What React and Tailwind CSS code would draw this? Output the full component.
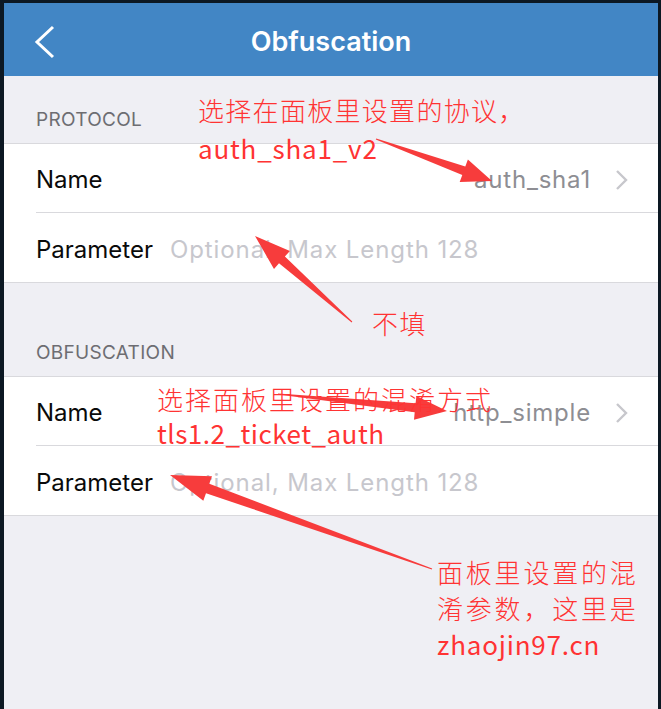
const ui = { fontFamily: 'Inter, "Noto Sans", sans-serif' };
const cjk = { fontFamily: '"Noto Sans CJK SC", "Noto Sans", sans-serif' };

// tapered arrow polygon from tail (x1,y1) to tip (x2,y2)
const arrowPoints = (x1, y1, x2, y2, headLen = 30, headW = 24, shaftW = 9, tailW = 1) => {
  const dx = x2 - x1;
  const dy = y2 - y1;
  const len = Math.hypot(dx, dy);
  const ux = dx / len;
  const uy = dy / len;
  const nx = -uy;
  const ny = ux;
  const bx = x2 - ux * headLen;
  const by = y2 - uy * headLen;
  const p = (x, y, w) => `${(x + nx * w / 2).toFixed(1)},${(y + ny * w / 2).toFixed(1)}`;
  return [
    p(x1, y1, tailW),
    p(bx, by, shaftW),
    p(bx, by, headW),
    `${x2},${y2}`,
    p(bx, by, -headW),
    p(bx, by, -shaftW),
    p(x1, y1, -tailW),
  ].join(' ');
};

const arrows = [
  [376, 139, 492, 181, 30, 24, 9],
  [352, 322, 255, 236, 36, 24, 9],
  [278, 394, 447, 411, 32, 24, 9],
  [432, 569, 170, 475, 40, 26, 10],
];

const Chevron = () => (
  <svg width="14" height="22" viewBox="0 0 14 22" className="ml-[24px] shrink-0">
    <polyline points="2,2 11,11 2,20" fill="none" stroke="#c7c7cc" strokeWidth="2.4" />
  </svg>
);

const Row = ({ label, value, placeholder, last }) => (
  <div className="flex items-stretch pl-[32px] h-[69px]">
    <div className={`flex-1 flex items-center pt-[4px] pr-[29px] ${last ? '' : 'border-b border-[#d9d9dd]'}`}>
      <span className="text-[24px] text-[#0a0a0a] shrink-0">{label}</span>
      {placeholder && (
        <span className="ml-[17px] text-[24px] tracking-[0.9px] text-[#c7c7cd] whitespace-nowrap">{placeholder}</span>
      )}
      {value && (
        <>
          <span className="ml-auto text-[24px] tracking-[0.8px] text-[#8e8e93]">{value}</span>
          <Chevron />
        </>
      )}
    </div>
  </div>
);

const Group = ({ title, value, top }) => (
  <div className={top}>
    <div className="pl-[32px] pb-[11px] text-[19px] leading-[24px] text-[#6d6d72] tracking-[0.3px]">{title}</div>
    <div className="bg-white border-y border-[#d9d9dd]">
      <Row label="Name" value={value} />
      <Row label="Parameter" placeholder="Optional, Max Length 128" last />
    </div>
  </div>
);

export default function App() {
  return (
    <div className="relative w-[661px] h-[709px] bg-[#0c1823] pt-[3px] pl-[4px] pr-[3px] overflow-hidden" style={ui}>
      <div className="h-full bg-[#efeff4] flex flex-col">
        <header className="relative h-[73px] bg-[#4286c5] flex items-center justify-center shrink-0">
          <svg width="24" height="36" viewBox="0 0 24 36" className="absolute left-[29px] top-[21px]">
            <polyline points="20,3 4,18 20,33" fill="none" stroke="#fff" strokeWidth="3" />
          </svg>
          <h1 className="text-[27px] font-semibold text-white mt-[6px]">Obfuscation</h1>
        </header>
        <Group title="PROTOCOL" value="auth_sha1" top="pt-[32px]" />
        <Group title="OBFUSCATION" value="http_simple" top="pt-[58px]" />
      </div>

      {/* red annotations drawn over the screenshot */}
      <svg className="absolute inset-0 pointer-events-none" width="661" height="709">
        {arrows.map((a, i) => (
          <polygon key={i} points={arrowPoints(...a)} fill="#f73c3c" />
        ))}
      </svg>
      <div className="absolute left-[198px] top-[91px] text-[#f33] text-[26px] font-light leading-[38px] tracking-[1.3px]" style={cjk}>
        <div>选择在面板里设置的协议，</div>
        <div className="font-normal tracking-[0.8px]">auth_sha1_v2</div>
      </div>
      <div className="absolute left-[372px] top-[305px] text-[#f33] text-[26px] font-light leading-[36px] tracking-[1.5px]" style={cjk}>
        不填
      </div>
      <div className="absolute left-[157px] top-[382px] text-[#f33] text-[26px] font-light leading-[34px] tracking-[2px]" style={cjk}>
        <div>选择面板里设置的混淆方式</div>
        <div className="font-normal tracking-[0.5px]">tls1.2_ticket_auth</div>
      </div>
      <div className="absolute left-[437px] top-[554px] text-[#f33] text-[26px] font-light leading-[36px] tracking-[2.8px]" style={cjk}>
        <div>面板里设置的混</div>
        <div>淆参数，这里是</div>
        <div className="font-normal tracking-[0.8px]">zhaojin97.cn</div>
      </div>
    </div>
  );
}
